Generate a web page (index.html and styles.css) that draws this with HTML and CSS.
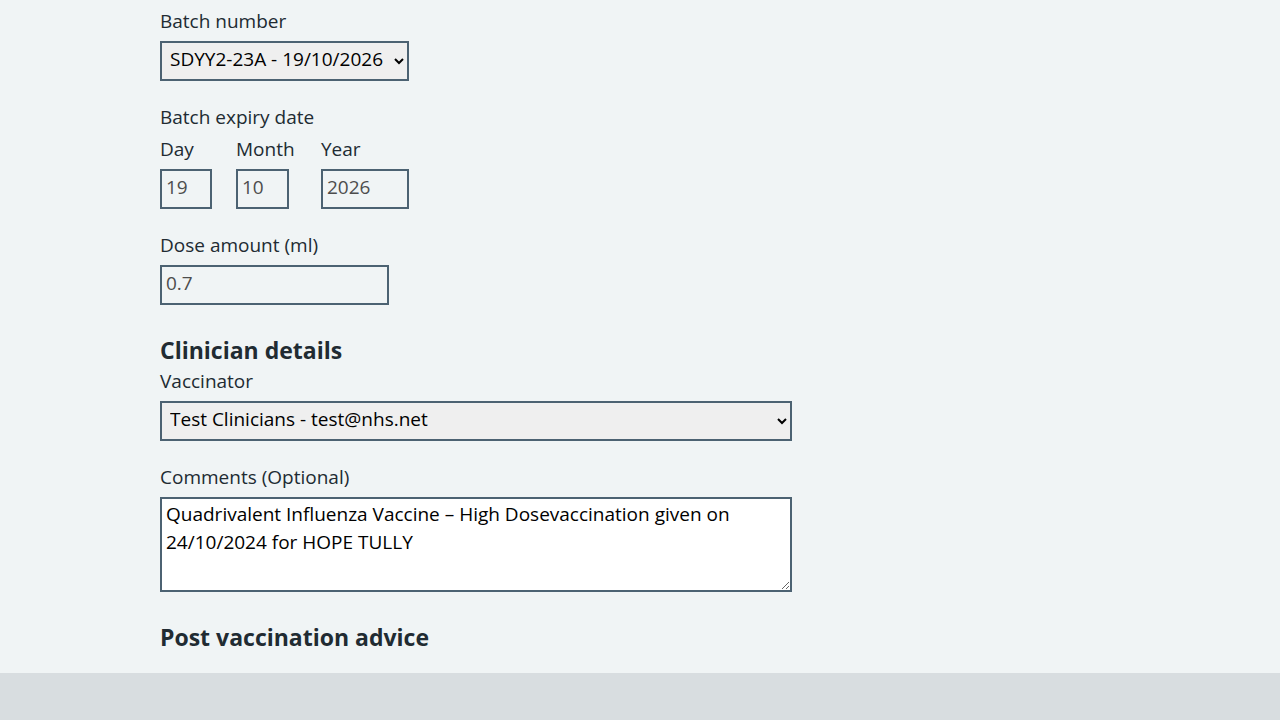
FILE: index.html
```html
<!DOCTYPE html>
<html lang="en">
<head>
<meta charset="utf-8">
<title>Vaccination details</title>
<link rel="stylesheet" href="styles.css">
</head>
<body>
<main class="page">
  <div class="container">
    <div class="group">
      <label class="label" for="batch">Batch number</label>
      <select id="batch" class="select select-batch">
        <option>SDYY2-23A - 19/10/2026</option>
      </select>
    </div>

    <fieldset class="group fieldset">
      <legend class="legend">Batch expiry date</legend>
      <div class="date">
        <div class="date-item">
          <label class="label" for="day">Day</label>
          <input id="day" class="input w2" value="19" readonly>
        </div>
        <div class="date-item date-month">
          <label class="label" for="month">Month</label>
          <input id="month" class="input w2m" value="10" readonly>
        </div>
        <div class="date-item">
          <label class="label" for="year">Year</label>
          <input id="year" class="input w4" value="2026" readonly>
        </div>
      </div>
    </fieldset>

    <div class="group">
      <label class="label" for="dose">Dose amount (ml)</label>
      <input id="dose" class="input w10" value="0.7" readonly>
    </div>

    <h2 class="heading">Clinician details</h2>
    <div class="group">
      <label class="label" for="vacc">Vaccinator</label>
      <select id="vacc" class="select select-full">
        <option>Test Clinicians - test@nhs.net</option>
      </select>
    </div>

    <div class="group">
      <label class="label" for="comments">Comments (Optional)</label>
      <textarea id="comments" class="textarea" rows="3">Quadrivalent Influenza Vaccine – High Dosevaccination given on 24/10/2024 for HOPE TULLY</textarea>
    </div>

    <h2 class="heading heading-advice">Post vaccination advice</h2>
  </div>
</main>
<footer class="footer"></footer>
</body>
</html>
```

FILE: styles.css
```css
html, body {
  margin: 0;
  padding: 0;
}
body {
  background: #f0f4f5;
  color: #212b32;
  font-family: "Open Sans", "Noto Sans", sans-serif;
  font-size: 19px;
  line-height: 28px;
}
.page {
  height: 673px;
  overflow: hidden;
}
.container {
  padding: 7px 0 0 160px;
}
.group {
  margin: 0 0 22px 0;
  display: flex;
  flex-direction: column;
  align-items: flex-start;
}
.fieldset {
  border: 0;
  padding: 0;
  min-width: 0;
  display: block;
}
.legend {
  padding: 0;
  margin: 0 0 4px 0;
  line-height: 28px;
}
.label {
  display: block;
  margin-bottom: 6px;
}
.date {
  display: flex;
  gap: 24px;
}
.date-item {
  display: flex;
  flex-direction: column;
}
.date-month {
  min-width: 61px;
}
.select, .input, .textarea {
  font-family: "Open Sans", "Noto Sans", sans-serif;
  font-size: 19px;
  border: 2px solid #4c6272;
  border-radius: 0;
  box-sizing: border-box;
  margin: 0;
}
.select {
  height: 40px;
  background-color: #efefef;
  color: #000;
  padding: 0 4px 4px 4px;
}
.select-batch {
  width: 249px;
}
.select-full {
  width: 632px;
}
.input {
  height: 40px;
  background: transparent;
  color: #4d4d4d;
  padding: 0 4px 4px 4px;
  outline: none;
}
.w2 { width: 52px; }
.w2m { width: 53px; }
.w4 { width: 88px; }
.w10 { width: 229px; }
.textarea {
  width: 632px;
  height: 95px;
  background: #fff;
  color: #000;
  padding: 1px 4px 4px 4px;
  line-height: 28px;
  resize: vertical;
}
.heading {
  font-size: 23px;
  line-height: 32px;
  font-weight: 700;
  margin: 29px 0 1px 0;
}
.heading-advice {
  margin-top: 29px;
}
.footer {
  height: 47px;
  background: #d8dde0;
}
```
